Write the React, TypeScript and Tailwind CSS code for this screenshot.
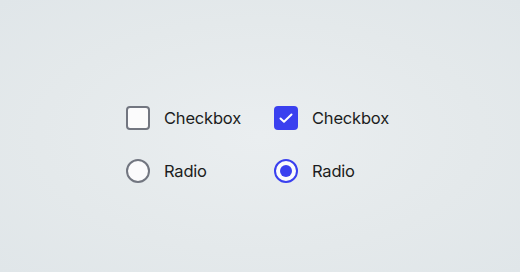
export default function App() {
  return (
    <div
      className="w-[520px] h-[272px] flex items-center justify-center bg-[#e2e7ea]"
      style={{ background: "radial-gradient(ellipse at 50% 50%, #eaeef0 0%, #e4e9eb 60%, #e0e6e9 100%)" }}
    >
      <div className="grid grid-cols-[148px_auto] gap-y-[28px] text-[16.5px] tracking-[-0.2px] text-[#1c1d21] font-['Inter',sans-serif] mt-[17px] ml-[-5px]">
        <div className="flex items-center gap-[14px]">
          <div className="w-6 h-6 rounded-[4px] border-2 border-[#727680] bg-[#fbfbfc]" />
          <span>Checkbox</span>
        </div>
        <div className="flex items-center gap-[14px]">
          <div className="w-6 h-6 rounded-[4px] bg-[#3a40ef] flex items-center justify-center">
            <svg width="18" height="18" viewBox="0 0 18 18" fill="none">
              <path d="M3.5 9.5l3.5 3.3L14.5 5.5" stroke="white" strokeWidth="2" strokeLinecap="round" strokeLinejoin="round" />
            </svg>
          </div>
          <span>Checkbox</span>
        </div>
        <div className="flex items-center gap-[14px]">
          <div className="w-6 h-6 rounded-full border-2 border-[#727680] bg-[#fbfbfc]" />
          <span>Radio</span>
        </div>
        <div className="flex items-center gap-[14px]">
          <div className="w-6 h-6 rounded-full border-2 border-[#3a40ef] bg-[#fbfbfc] flex items-center justify-center">
            <div className="w-3 h-3 rounded-full bg-[#3a40ef]" />
          </div>
          <span>Radio</span>
        </div>
      </div>
    </div>
  );
}
